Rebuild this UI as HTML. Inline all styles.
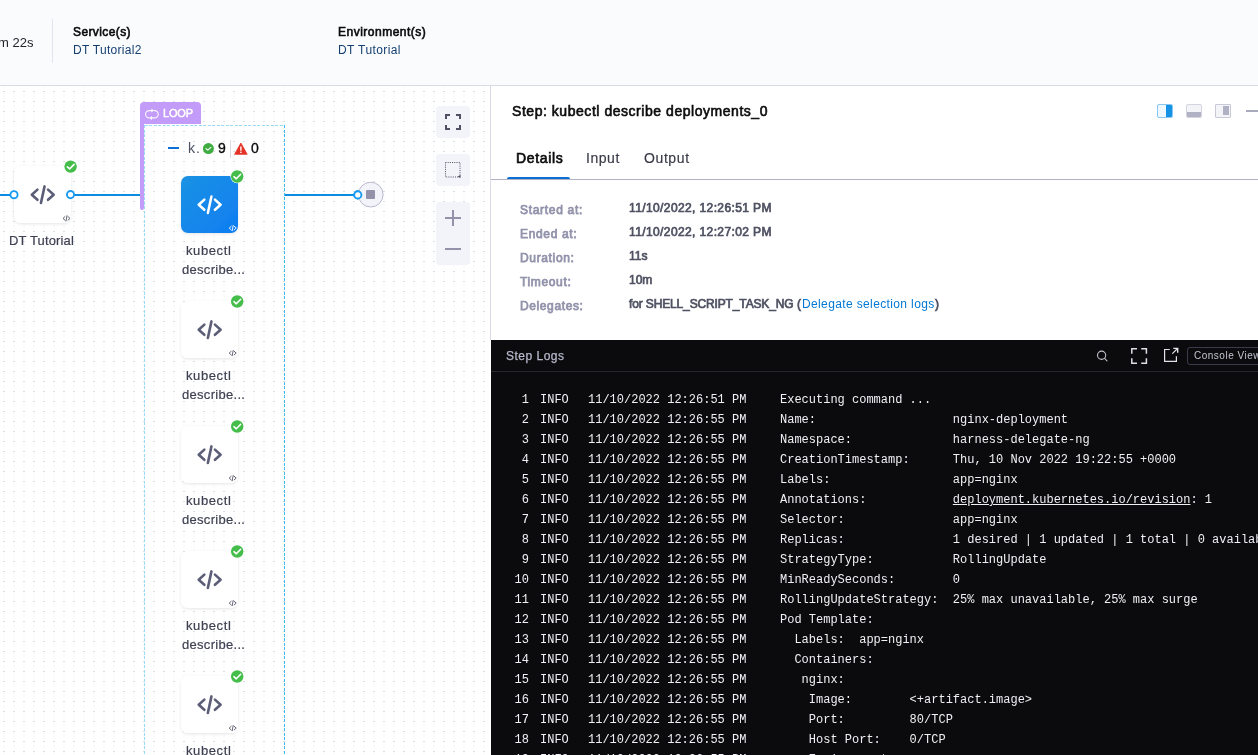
<!DOCTYPE html>
<html>
<head>
<meta charset="utf-8">
<style>
*{box-sizing:border-box;margin:0;padding:0}
html,body{width:1258px;height:755px;overflow:hidden;background:#fff}
body{position:relative;font-family:"Liberation Sans",sans-serif;color:#0b0b0d}
.a{position:absolute}
.t{position:absolute;white-space:pre;line-height:1;will-change:transform}
#hdr{left:0;top:0;width:1258px;height:86px;background:#fafbfd;border-bottom:1px solid #d9dae5}
#canvas{left:0;top:86px;width:490px;height:669px;overflow:hidden;background:#fff}
#panel{left:490px;top:86px;width:768px;height:254px;background:#fff;border-left:1px solid #d9dae5}
#logs{left:491px;top:340px;width:767px;height:415px;background:#0b0b0d;overflow:hidden}
.lbl{font-size:12px;font-weight:400;-webkit-text-stroke-width:0.75px;color:#9293ab}
.val{font-size:12px;font-weight:400;-webkit-text-stroke-width:0.7px;color:#4f5162}
.ln{will-change:transform;position:absolute;left:0;width:767px;height:20px;font-family:"Liberation Mono",monospace;font-size:12px;line-height:20px;color:#f0f0f4;white-space:pre}
.ln span{position:absolute;top:0}
.ln .n{left:0;width:38px;text-align:right}
.ln .i{left:49px}
.ln .d{left:97px}
.ln .m{left:289px}
</style>
</head>
<body>
<!-- HEADER -->
<div id="hdr" class="a">
  <div class="t" style="left:-2px;top:36px;font-size:13px;color:#22222a">m 22s</div>
  <div class="a" style="left:52px;top:19px;width:1px;height:44px;background:#e3e4ec"></div>
  <div class="t" style="left:73px;top:26px;font-size:12px;-webkit-text-stroke-width:0.6px;letter-spacing:0.39px">Service(s)</div>
  <div class="t" style="left:73px;top:44px;font-size:12px;color:#153f70;letter-spacing:0.3px">DT Tutorial2</div>
  <div class="t" style="left:338px;top:26px;font-size:12px;-webkit-text-stroke-width:0.6px;letter-spacing:0.5px">Environment(s)</div>
  <div class="t" style="left:338px;top:44px;font-size:12px;color:#153f70;letter-spacing:0.4px">DT Tutorial</div>
</div>

<!-- CANVAS -->
<div id="canvas" class="a"></div>
<svg class="a" style="left:0;top:86px" width="490" height="669">
<defs><pattern id="dots" patternUnits="userSpaceOnUse" x="3" y="5" width="10" height="10"><rect x="0" y="0" width="2" height="1" fill="#dddee4"/><rect x="0" y="2" width="2" height="7" fill="#fafcfe"/></pattern></defs>
<rect width="490" height="669" fill="url(#dots)" shape-rendering="crispEdges"/>
</svg>
<svg class="a" style="left:0;top:0" width="490" height="755">
<defs><filter id="sh" x="-20%" y="-20%" width="140%" height="140%"><feDropShadow dx="0" dy="1" stdDeviation="1.5" flood-color="#000" flood-opacity="0.10"/></filter><linearGradient id="bg" x1="0" y1="0" x2="1" y2="1"><stop offset="0" stop-color="#1b92e3"/><stop offset="1" stop-color="#0f7df2"/></linearGradient></defs>
<g shape-rendering="crispEdges" fill="#0c8ce1"><rect x="0" y="194" width="12" height="2"/><rect x="73" y="194" width="68" height="2"/><rect x="284" y="194" width="71" height="2"/></g>
<g fill="none" stroke-width="1" shape-rendering="crispEdges"><line x1="144.5" y1="125.5" x2="284.5" y2="125.5" stroke="#9ad9f8" stroke-dasharray="3 1.5"/><line x1="144.5" y1="125" x2="144.5" y2="755" stroke="#9ad9f8" stroke-dasharray="3 1.5"/><line x1="284.5" y1="125" x2="284.5" y2="755" stroke="#3fbcf5" stroke-dasharray="3 1.5"/></g>
<path d="M140,106 a4,4 0 0 1 4,-4 h53 a4,4 0 0 1 4,4 v18 h-57 v84 a2,2 0 0 1 -4,0 z" fill="#c39cfa"/>
<g fill="none" stroke="#fff" stroke-width="1.1" stroke-linecap="round" opacity="0.92"><path d="M151.8,110.6 H149.2 A3.65,3.65 0 0 0 149.2,117.9"/><path d="M151.2,117.9 H154.6 A3.65,3.65 0 0 0 154.6,110.6 H154.3"/></g><g fill="#fff" opacity="0.92"><path d="M151.4,108.6 L154,110.6 L151.4,112.6 Z"/><path d="M152,115.9 L149.4,117.9 L152,119.9 Z"/></g>
<rect x="14" y="166" width="57" height="57" rx="7" fill="#fff" filter="url(#sh)"/>
<g fill="none" stroke="#5c5e78" stroke-width="2.6" stroke-linecap="round" stroke-linejoin="round"><polyline points="37.45,189.60 31.80,194.70 37.45,199.80"/><polyline points="48.05,189.60 53.70,194.70 48.05,199.80"/><line x1="44.55" y1="186.40" x2="40.95" y2="203.00"/></g>
<g fill="none" stroke="#4f5162" stroke-width="0.9" stroke-linecap="round"><polyline points="65,216.60000000000002 63,218.4 65,220.20000000000002"/><polyline points="68,216.60000000000002 70,218.4 68,220.20000000000002"/><line x1="67" y1="215.8" x2="66" y2="221.0"/></g>
<circle cx="70.6" cy="166.6" r="6.8" fill="#fff"/><circle cx="70.6" cy="166.6" r="6.2" fill="#44bd4b"/><polyline points="67.39999999999999,166.79999999999998 69.69999999999999,168.9 74.1,164.4" fill="none" stroke="#fff" stroke-width="1.6" stroke-linecap="round" stroke-linejoin="round"/>
<g fill="#fff" stroke="#1a9bf3" stroke-width="1.9"><circle cx="14" cy="194.7" r="3.6"/><circle cx="70.5" cy="194.6" r="3.6"/><circle cx="357.8" cy="194.9" r="3.6"/></g>
<rect x="181" y="176" width="57" height="57" rx="7" fill="url(#bg)" filter="url(#sh)"/>
<g fill="none" stroke="#fff" stroke-width="2.5" stroke-linecap="round" stroke-linejoin="round"><polyline points="204.35,199.60 198.70,204.70 204.35,209.80"/><polyline points="214.95,199.60 220.60,204.70 214.95,209.80"/><line x1="211.45" y1="196.40" x2="207.85" y2="213.00"/></g>
<g fill="none" stroke="#ffffff" stroke-width="0.9" stroke-linecap="round"><polyline points="231.2,226.3 229.2,228.1 231.2,229.9"/><polyline points="234.2,226.3 236.2,228.1 234.2,229.9"/><line x1="233.2" y1="225.5" x2="232.2" y2="230.7"/></g>
<circle cx="237.2" cy="176.5" r="6.8" fill="#fff"/><circle cx="237.2" cy="176.5" r="6.2" fill="#44bd4b"/><polyline points="234.0,176.7 236.29999999999998,178.8 240.7,174.3" fill="none" stroke="#fff" stroke-width="1.6" stroke-linecap="round" stroke-linejoin="round"/>
<rect x="181" y="301" width="57" height="57" rx="7" fill="#fff" filter="url(#sh)"/>
<g fill="none" stroke="#5c5e78" stroke-width="2.6" stroke-linecap="round" stroke-linejoin="round"><polyline points="204.35,324.60 198.70,329.70 204.35,334.80"/><polyline points="214.95,324.60 220.60,329.70 214.95,334.80"/><line x1="211.45" y1="321.40" x2="207.85" y2="338.00"/></g>
<g fill="none" stroke="#4f5162" stroke-width="0.9" stroke-linecap="round"><polyline points="231.2,351.3 229.2,353.1 231.2,354.9"/><polyline points="234.2,351.3 236.2,353.1 234.2,354.9"/><line x1="233.2" y1="350.5" x2="232.2" y2="355.7"/></g>
<circle cx="237.2" cy="301.5" r="6.8" fill="#fff"/><circle cx="237.2" cy="301.5" r="6.2" fill="#44bd4b"/><polyline points="234.0,301.7 236.29999999999998,303.8 240.7,299.3" fill="none" stroke="#fff" stroke-width="1.6" stroke-linecap="round" stroke-linejoin="round"/>
<rect x="181" y="426" width="57" height="57" rx="7" fill="#fff" filter="url(#sh)"/>
<g fill="none" stroke="#5c5e78" stroke-width="2.6" stroke-linecap="round" stroke-linejoin="round"><polyline points="204.35,449.60 198.70,454.70 204.35,459.80"/><polyline points="214.95,449.60 220.60,454.70 214.95,459.80"/><line x1="211.45" y1="446.40" x2="207.85" y2="463.00"/></g>
<g fill="none" stroke="#4f5162" stroke-width="0.9" stroke-linecap="round"><polyline points="231.2,476.3 229.2,478.1 231.2,479.9"/><polyline points="234.2,476.3 236.2,478.1 234.2,479.9"/><line x1="233.2" y1="475.5" x2="232.2" y2="480.7"/></g>
<circle cx="237.2" cy="426.5" r="6.8" fill="#fff"/><circle cx="237.2" cy="426.5" r="6.2" fill="#44bd4b"/><polyline points="234.0,426.7 236.29999999999998,428.8 240.7,424.3" fill="none" stroke="#fff" stroke-width="1.6" stroke-linecap="round" stroke-linejoin="round"/>
<rect x="181" y="551" width="57" height="57" rx="7" fill="#fff" filter="url(#sh)"/>
<g fill="none" stroke="#5c5e78" stroke-width="2.6" stroke-linecap="round" stroke-linejoin="round"><polyline points="204.35,574.60 198.70,579.70 204.35,584.80"/><polyline points="214.95,574.60 220.60,579.70 214.95,584.80"/><line x1="211.45" y1="571.40" x2="207.85" y2="588.00"/></g>
<g fill="none" stroke="#4f5162" stroke-width="0.9" stroke-linecap="round"><polyline points="231.2,601.3 229.2,603.1 231.2,604.9"/><polyline points="234.2,601.3 236.2,603.1 234.2,604.9"/><line x1="233.2" y1="600.5" x2="232.2" y2="605.7"/></g>
<circle cx="237.2" cy="551.5" r="6.8" fill="#fff"/><circle cx="237.2" cy="551.5" r="6.2" fill="#44bd4b"/><polyline points="234.0,551.7 236.29999999999998,553.8 240.7,549.3" fill="none" stroke="#fff" stroke-width="1.6" stroke-linecap="round" stroke-linejoin="round"/>
<rect x="181" y="676" width="57" height="57" rx="7" fill="#fff" filter="url(#sh)"/>
<g fill="none" stroke="#5c5e78" stroke-width="2.6" stroke-linecap="round" stroke-linejoin="round"><polyline points="204.35,699.60 198.70,704.70 204.35,709.80"/><polyline points="214.95,699.60 220.60,704.70 214.95,709.80"/><line x1="211.45" y1="696.40" x2="207.85" y2="713.00"/></g>
<g fill="none" stroke="#4f5162" stroke-width="0.9" stroke-linecap="round"><polyline points="231.2,726.3 229.2,728.1 231.2,729.9"/><polyline points="234.2,726.3 236.2,728.1 234.2,729.9"/><line x1="233.2" y1="725.5" x2="232.2" y2="730.7"/></g>
<circle cx="237.2" cy="676.5" r="6.8" fill="#fff"/><circle cx="237.2" cy="676.5" r="6.2" fill="#44bd4b"/><polyline points="234.0,676.7 236.29999999999998,678.8 240.7,674.3" fill="none" stroke="#fff" stroke-width="1.6" stroke-linecap="round" stroke-linejoin="round"/>
<circle cx="370.7" cy="194.6" r="12.4" fill="#f3f3fa" stroke="#b8b7cc" stroke-width="1"/><rect x="366" y="190" width="9" height="9" rx="1" fill="#9293ab"/>
<g fill="#fff" stroke="#1a9bf3" stroke-width="1.9"><circle cx="357.8" cy="194.9" r="3.6"/></g>
<rect x="168" y="147" width="11" height="2" fill="#0b6fd6"/>
<circle cx="208.4" cy="148.6" r="5.5" fill="#3eac41"/><polyline points="206,148.6 207.8,150.2 210.9,147.3" fill="none" stroke="#fff" stroke-width="1.1" stroke-linecap="round" stroke-linejoin="round"/>
<rect x="230" y="140" width="1" height="18" fill="#d9dae5"/>
<path d="M240.9,143 L247.2,154.3 L234.6,154.3 Z" fill="#e43326" stroke="#e43326" stroke-width="0.8" stroke-linejoin="round"/><rect x="240.2" y="146.5" width="1.4" height="4.2" fill="#fff"/><rect x="240.2" y="151.6" width="1.4" height="1.4" fill="#fff"/>
<g fill="#f3f3fa"><rect x="436" y="106" width="34" height="32" rx="4"/><rect x="436" y="154" width="34" height="32" rx="4"/><rect x="436" y="202" width="34" height="63" rx="4"/></g>
<g fill="none" stroke="#4f5162" stroke-width="2" stroke-linecap="butt"><polyline points="446,119 446,115 450,115"/><polyline points="456,115 460,115 460,119"/><polyline points="446,125 446,129 450,129"/><polyline points="460,125 460,129 456,129"/></g>
<rect x="445.5" y="162.5" width="14.5" height="14.5" fill="none" stroke="#4f5162" stroke-width="1" stroke-dasharray="1 1.2"/><path d="M457.5,176.5 l3,-1.5 v3 z" fill="#4f5162"/>
<g fill="#9293ab"><rect x="445" y="217" width="16" height="2"/><rect x="452" y="210" width="2" height="16"/><rect x="445" y="248" width="16" height="2"/></g>
</svg>

<div class="t" style="left:9.3px;top:233.7px;font-size:13px;color:#3f4152;-webkit-text-stroke-width:0.2px;letter-spacing:0.15px">DT Tutorial</div>
<div class="t" style="left:163px;top:108px;font-size:11px;-webkit-text-stroke-width:0.5px;color:#fff;letter-spacing:-0.17px">LOOP</div>
<div class="t" style="left:187.5px;top:141px;font-size:14px;color:#4f5162;letter-spacing:1px">k.</div>
<div class="t" style="left:218.3px;top:141.1px;font-size:14px;color:#0b0b0d;-webkit-text-stroke-width:0.35px">9</div>
<div class="t" style="left:250.7px;top:141.1px;font-size:14px;color:#0b0b0d;-webkit-text-stroke-width:0.35px">0</div>
<div class="t" style="left:185.5px;top:244px;font-size:13px;color:#3f4152;-webkit-text-stroke-width:0.2px;letter-spacing:0.6px">kubectl</div>
<div class="t" style="left:182.3px;top:263px;font-size:13px;color:#3f4152;-webkit-text-stroke-width:0.2px;letter-spacing:0.3px">describe...</div>
<div class="t" style="left:185.5px;top:369px;font-size:13px;color:#3f4152;-webkit-text-stroke-width:0.2px;letter-spacing:0.6px">kubectl</div>
<div class="t" style="left:182.3px;top:388px;font-size:13px;color:#3f4152;-webkit-text-stroke-width:0.2px;letter-spacing:0.3px">describe...</div>
<div class="t" style="left:185.5px;top:494px;font-size:13px;color:#3f4152;-webkit-text-stroke-width:0.2px;letter-spacing:0.6px">kubectl</div>
<div class="t" style="left:182.3px;top:513px;font-size:13px;color:#3f4152;-webkit-text-stroke-width:0.2px;letter-spacing:0.3px">describe...</div>
<div class="t" style="left:185.5px;top:619px;font-size:13px;color:#3f4152;-webkit-text-stroke-width:0.2px;letter-spacing:0.6px">kubectl</div>
<div class="t" style="left:182.3px;top:638px;font-size:13px;color:#3f4152;-webkit-text-stroke-width:0.2px;letter-spacing:0.3px">describe...</div>
<div class="t" style="left:185.5px;top:744px;font-size:13px;color:#3f4152;-webkit-text-stroke-width:0.2px;letter-spacing:0.6px">kubectl</div>
<div class="t" style="left:182.3px;top:763px;font-size:13px;color:#3f4152;-webkit-text-stroke-width:0.2px;letter-spacing:0.3px">describe...</div>


<!-- RIGHT PANEL -->
<div id="panel" class="a">
  <div class="t" style="left:21px;top:18px;font-size:14px;-webkit-text-stroke-width:0.6px;letter-spacing:0.54px">Step: kubectl describe deployments_0</div>
  <!-- layout icons -->
  <div class="a" style="left:666px;top:18px;width:16px;height:14px;border:1px solid #86c6f4;border-radius:2px;background:#eef8fe;overflow:hidden"><div class="a" style="left:8px;top:0;width:7px;height:12px;background:#1592e6"></div></div>
  <div class="a" style="left:695px;top:18px;width:16px;height:14px;border:1px solid #d3d4df;border-radius:2px;background:#f3f4f8;overflow:hidden"><div class="a" style="left:0;top:7px;width:14px;height:5px;background:#b0b1c4"></div></div>
  <div class="a" style="left:724px;top:18px;width:16px;height:14px;border:1px solid #c9cad7;border-radius:1px;background:#f3f4f8;overflow:hidden"><div class="a" style="left:7px;top:1px;width:6px;height:9px;background:#b0b1c4"></div></div>
  <div class="a" style="left:755px;top:24px;width:13px;height:2px;background:#a9aabd"></div>
  <!-- tabs -->
  <div class="t" style="left:24.5px;top:65px;font-size:14px;-webkit-text-stroke-width:0.65px;letter-spacing:0.67px">Details</div>
  <div class="t" style="left:94.5px;top:65px;font-size:14px;color:#383946;-webkit-text-stroke-width:0.15px;letter-spacing:0.55px">Input</div>
  <div class="t" style="left:152.5px;top:65px;font-size:14px;color:#383946;-webkit-text-stroke-width:0.15px;letter-spacing:0.6px">Output</div>
  <div class="a" style="left:0;top:93px;width:768px;height:1px;background:#b0b1c4"></div>
  <div class="a" style="left:16px;top:91px;width:63px;height:2px;background:#0a6ed3;border-radius:2px 2px 0 0"></div>
  <!-- details -->
  <div class="t lbl" style="left:28.5px;top:118px;letter-spacing:0.7px">Started at:</div>
  <div class="t lbl" style="left:28.5px;top:142px;letter-spacing:0.65px">Ended at:</div>
  <div class="t lbl" style="left:28.5px;top:166px;letter-spacing:0.65px">Duration:</div>
  <div class="t lbl" style="left:28.5px;top:190px;letter-spacing:0.64px">Timeout:</div>
  <div class="t lbl" style="left:28.5px;top:214px;letter-spacing:0.61px">Delegates:</div>
  <div class="t val" style="left:138px;top:116px;letter-spacing:0.39px">11/10/2022, 12:26:51 PM</div>
  <div class="t val" style="left:138px;top:140px;letter-spacing:0.39px">11/10/2022, 12:27:02 PM</div>
  <div class="t val" style="left:138px;top:164px">11s</div>
  <div class="t val" style="left:138px;top:188px">10m</div>
  <div class="t val" style="left:138px;top:212px;letter-spacing:-0.14px">for SHELL_SCRIPT_TASK_NG</div>
  <div class="t val" style="left:306px;top:212px">(</div>
  <div class="t" style="left:311px;top:212px;font-size:12px;color:#0278d5;letter-spacing:0.37px">Delegate selection logs</div>
  <div class="t val" style="left:443.5px;top:212px">)</div>
</div>

<!-- LOGS -->
<div id="logs" class="a">
  <div class="t" style="left:14.5px;top:10px;font-size:12px;color:#b8b9cc;-webkit-text-stroke-width:0.25px;letter-spacing:0.5px">Step Logs</div>
  <svg class="a" style="left:0;top:0" width="767" height="40">
    <g fill="none" stroke="#c2c2ca" stroke-width="1.1" stroke-linecap="round"><circle cx="610.6" cy="15.25" r="4.1"/><line x1="613.6" y1="18.4" x2="616" y2="20.8"/></g>
    <g fill="none" stroke="#dedee4" stroke-width="1.5"><polyline points="640.8,13.8 640.8,8.8 646,8.8"/><polyline points="650.2,8.8 655.4,8.8 655.4,13.8"/><polyline points="640.8,18.2 640.8,23.2 646,23.2"/><polyline points="655.4,18.2 655.4,23.2 650.2,23.2"/></g>
    <g fill="none" stroke="#e2e2ea" stroke-width="1.2"><polyline points="678.8,9.5 673.6,9.5 673.6,21.4 685.4,21.4 685.4,16.3"/><line x1="681.3" y1="13.6" x2="686.3" y2="8.7"/><polyline points="682.3,8.4 686.7,8.4 686.7,12.8" stroke-width="1.4"/></g>
  </svg>
  <div class="a" style="left:696px;top:7px;width:90px;height:18px;border:1px solid #3b3b4b;border-radius:3px"></div>
  <div class="t" style="left:702.5px;top:10.5px;font-size:10px;color:#c5c5d3;letter-spacing:0.5px">Console View</div>
  <div class="a" style="left:0;top:31px;width:767px;height:1px;background:#26262e"></div>
  <div class="ln" style="top:49.8px"><span class="n">1</span><span class="i">INFO</span><span class="d">11/10/2022 12:26:51 PM</span><span class="m">Executing command ...</span></div>
  <div class="ln" style="top:69.8px"><span class="n">2</span><span class="i">INFO</span><span class="d">11/10/2022 12:26:55 PM</span><span class="m">Name:                   nginx-deployment</span></div>
  <div class="ln" style="top:89.8px"><span class="n">3</span><span class="i">INFO</span><span class="d">11/10/2022 12:26:55 PM</span><span class="m">Namespace:              harness-delegate-ng</span></div>
  <div class="ln" style="top:109.8px"><span class="n">4</span><span class="i">INFO</span><span class="d">11/10/2022 12:26:55 PM</span><span class="m">CreationTimestamp:      Thu, 10 Nov 2022 19:22:55 +0000</span></div>
  <div class="ln" style="top:129.8px"><span class="n">5</span><span class="i">INFO</span><span class="d">11/10/2022 12:26:55 PM</span><span class="m">Labels:                 app=nginx</span></div>
  <div class="ln" style="top:149.8px"><span class="n">6</span><span class="i">INFO</span><span class="d">11/10/2022 12:26:55 PM</span><span class="m">Annotations:            <u>deployment.kubernetes.io/revision</u>: 1</span></div>
  <div class="ln" style="top:169.8px"><span class="n">7</span><span class="i">INFO</span><span class="d">11/10/2022 12:26:55 PM</span><span class="m">Selector:               app=nginx</span></div>
  <div class="ln" style="top:189.8px"><span class="n">8</span><span class="i">INFO</span><span class="d">11/10/2022 12:26:55 PM</span><span class="m">Replicas:               1 desired | 1 updated | 1 total | 0 available | 0 unavailable</span></div>
  <div class="ln" style="top:209.8px"><span class="n">9</span><span class="i">INFO</span><span class="d">11/10/2022 12:26:55 PM</span><span class="m">StrategyType:           RollingUpdate</span></div>
  <div class="ln" style="top:229.8px"><span class="n">10</span><span class="i">INFO</span><span class="d">11/10/2022 12:26:55 PM</span><span class="m">MinReadySeconds:        0</span></div>
  <div class="ln" style="top:249.8px"><span class="n">11</span><span class="i">INFO</span><span class="d">11/10/2022 12:26:55 PM</span><span class="m">RollingUpdateStrategy:  25% max unavailable, 25% max surge</span></div>
  <div class="ln" style="top:269.8px"><span class="n">12</span><span class="i">INFO</span><span class="d">11/10/2022 12:26:55 PM</span><span class="m">Pod Template:</span></div>
  <div class="ln" style="top:289.8px"><span class="n">13</span><span class="i">INFO</span><span class="d">11/10/2022 12:26:55 PM</span><span class="m">  Labels:  app=nginx</span></div>
  <div class="ln" style="top:309.8px"><span class="n">14</span><span class="i">INFO</span><span class="d">11/10/2022 12:26:55 PM</span><span class="m">  Containers:</span></div>
  <div class="ln" style="top:329.8px"><span class="n">15</span><span class="i">INFO</span><span class="d">11/10/2022 12:26:55 PM</span><span class="m">   nginx:</span></div>
  <div class="ln" style="top:349.8px"><span class="n">16</span><span class="i">INFO</span><span class="d">11/10/2022 12:26:55 PM</span><span class="m">    Image:        &lt;+artifact.image&gt;</span></div>
  <div class="ln" style="top:369.8px"><span class="n">17</span><span class="i">INFO</span><span class="d">11/10/2022 12:26:55 PM</span><span class="m">    Port:         80/TCP</span></div>
  <div class="ln" style="top:389.8px"><span class="n">18</span><span class="i">INFO</span><span class="d">11/10/2022 12:26:55 PM</span><span class="m">    Host Port:    0/TCP</span></div>
  <div class="ln" style="top:409.8px"><span class="n">19</span><span class="i">INFO</span><span class="d">11/10/2022 12:26:55 PM</span><span class="m">    Environment:  &lt;none&gt;</span></div>
</div>
</body>
</html>
